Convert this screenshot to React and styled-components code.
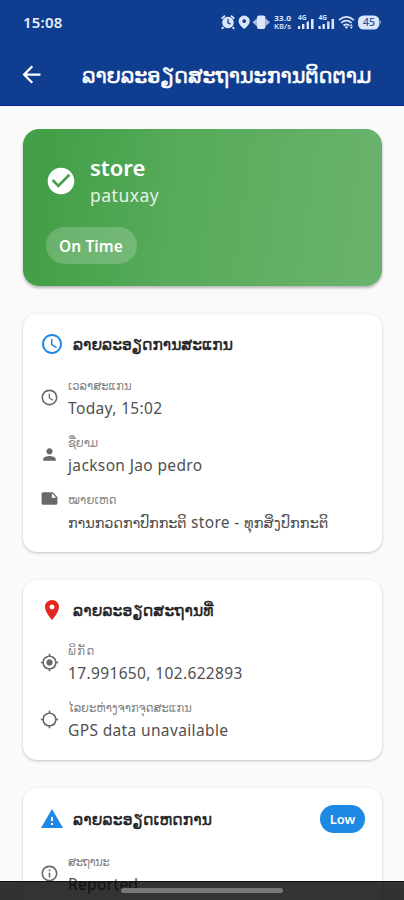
import React from 'react';
import styled, { createGlobalStyle } from 'styled-components';
import {
  MdAccessTime, MdPerson, MdNote, MdLocationOn, MdMyLocation, MdLocationSearching,
  MdWarning, MdInfoOutline, MdCheckCircle, MdArrowBack,
} from 'react-icons/md';

const GlobalStyle = createGlobalStyle`
  * { box-sizing: border-box; }
  body { margin: 0; background: #fafafa; overflow: hidden; }
`;

const Screen = styled.div`
  position: relative;
  width: 404px;
  height: 900px;
  overflow: hidden;
  background: #fafafa;
  font-family: 'Noto Sans', 'DejaVu Sans', sans-serif;

  svg { flex-shrink: 0; }
`;

const Header = styled.header`
  height: 106px;
  background: #0f3e91;
  border-bottom: 1px solid #06208a;
  color: #fff;
`;

const StatusBar = styled.div`
  height: 44px;
  padding: 0 22px 0 23px;
  display: flex;
  align-items: center;
  justify-content: space-between;
`;

const Clock = styled.span`
  font-size: 15px;
  font-weight: 600;
  letter-spacing: 0.2px;
  color: #e6edfb;
`;

const StatusIcons = styled.svg`
  display: block;
  width: 164px;
  height: 20px;
`;

const AppBar = styled.div`
  height: 60px;
  padding-left: 18px;
  display: flex;
  align-items: center;
  gap: 37px;
`;

const AppTitle = styled.h1`
  margin: 2px 0 0;
  white-space: nowrap;
  font-size: 20.8px;
  font-weight: 400;
  line-height: 30px;
  -webkit-text-stroke: 0.5px currentColor;
  letter-spacing: ${(p) => p.$track}px;
`;

const Content = styled.main`
  padding: 23px 22px 0 23px;
  display: flex;
  flex-direction: column;
  gap: 28px;
`;

const Summary = styled.section`
  height: 157px;
  border-radius: 16px;
  padding: 23px;
  color: #fff;
  background: linear-gradient(98deg, #43a047 8%, #58ab5b 45%, #68b26b 92%);
  box-shadow: 0 2px 3px rgba(0, 0, 0, 0.28);
`;

const SummaryTop = styled.div`
  height: 57px;
  margin: 0 0 18px -1px;
  display: flex;
  align-items: center;
  gap: 13px;
`;

const StoreName = styled.div`
  font-size: 22px;
  font-weight: 600;
  line-height: 30px;
`;

const StorePlace = styled.div`
  font-size: 17.5px;
  line-height: 27px;
  letter-spacing: 0.5px;
  color: #e4f2e5;
`;

const TimeChip = styled.span`
  display: inline-flex;
  align-items: center;
  justify-content: center;
  width: 91px;
  height: 37px;
  padding-right: 1px;
  border-radius: 19px;
  background: rgba(255, 255, 255, 0.2);
  font-size: 15.5px;
  font-weight: 600;
  letter-spacing: 0.1px;
`;

const Card = styled.section`
  height: ${(p) => p.$height}px;
  padding: 17px;
  border-radius: 14px;
  background: #fff;
  box-shadow: 0 1px 3px rgba(0, 0, 0, 0.22);
`;

const CardHead = styled.div`
  height: ${(p) => p.$height || 26}px;
  margin-bottom: ${(p) => p.$gap}px;
  display: flex;
  align-items: center;
  gap: 9px;
  color: ${(p) => p.$color};
`;

const CardTitle = styled.h2`
  margin: 0;
  flex: 1;
  white-space: nowrap;
  color: #1c1c1c;
  font-size: 15.5px;
  font-weight: 400;
  line-height: 26px;
  -webkit-text-stroke: 0.45px currentColor;
  letter-spacing: ${(p) => p.$track}px;
`;

const SeverityChip = styled.span`
  display: inline-flex;
  align-items: center;
  justify-content: center;
  width: 45px;
  height: 28px;
  border-radius: 14px;
  background: #1e88e5;
  color: #fff;
  font-size: 13px;
  font-weight: 600;
`;

const Row = styled.div`
  height: 44px;
  margin-bottom: 13px;
  display: flex;
  align-items: ${(p) => (p.$top ? 'flex-start' : 'center')};
  gap: 9px;
  color: #686868;
`;

const Label = styled.div`
  height: 20px;
  white-space: nowrap;
  font-size: 11.5px;
  line-height: 21px;
  color: #858585;
  letter-spacing: ${(p) => p.$track}px;
`;

const Value = styled.div`
  height: 24px;
  white-space: nowrap;
  font-size: 15.5px;
  line-height: 26px;
  color: #505050;
  letter-spacing: ${(p) => p.$track}px;
`;

const LaoText = styled.span`
  font-size: 14.5px;
  letter-spacing: ${(p) => p.$track}px;
`;

const NavBar = styled.div`
  position: absolute;
  left: 0;
  right: 0;
  bottom: 0;
  height: 19px;
  display: flex;
  justify-content: center;
  padding-top: 6px;
  background: rgba(0, 0, 0, 0.8);
  border-top: 1px solid #111;
`;

const NavHandle = styled.div`
  width: 162px;
  height: 5px;
  border-radius: 3px;
  background: #777;
`;

function Signal({ x }) {
  return (
    <g transform={`translate(${x} 0)`}>
      <text x="0" y="8.2" fontSize="6.5" fontWeight="700">4G</text>
      <rect x="0" y="14" width="2.2" height="3" />
      <rect x="4" y="12" width="2.4" height="5" />
      <rect x="8.6" y="9.5" width="2.4" height="7.5" />
      <rect x="13" y="7" width="2.6" height="10" />
    </g>
  );
}

function StatusGlyphs() {
  return (
    <StatusIcons viewBox="0 0 164 20" fill="#dce6fa" fontFamily="Noto Sans, sans-serif">
      <circle cx="10" cy="10.5" r="5.8" />
      <path d="M3.6 6.6 7 3.7M16.4 6.6 13 3.7M5.5 15l-1.7 1.9M14.5 15l1.7 1.9" stroke="#dce6fa" strokeWidth="1.8" />
      <path d="M10 7v3.8l2.5 1.3" fill="none" stroke="#0f3e91" strokeWidth="1.3" />
      <path fillRule="evenodd" d="M26.2 3.5a5.6 5.6 0 0 0-5.6 5.6c0 3.9 5.6 7.9 5.6 7.9s5.6-4 5.6-7.9a5.6 5.6 0 0 0-5.6-5.6zm0 3.7a1.9 1.9 0 1 1 0 3.8 1.9 1.9 0 0 1 0-3.8z" />
      <rect x="39" y="3.5" width="8.4" height="13.5" rx="2" />
      <path d="M39 6.3v8l-4.6-4zM47.4 6.3v8l4.6-4z" opacity="0.75" />
      <text x="56" y="9" fontSize="6.8" fontWeight="700" textLength="17" lengthAdjust="spacingAndGlyphs">33.0</text>
      <text x="56" y="17" fontSize="6.8" fontWeight="600" textLength="17" lengthAdjust="spacingAndGlyphs">KB/s</text>
      <Signal x={80} />
      <Signal x={100.5} />
      <g fill="none" stroke="#dce6fa" strokeWidth="1.7">
        <path d="M121 8.1q7.4-6.4 14.8 0" />
        <path d="M123.2 10.9q5.2-4.4 10.4 0" />
        <path d="M125.5 13.5q2.9-2.4 5.8 0" />
      </g>
      <path d="M126.4 14.6h4l-2 2.4zM133.3 12l1.5 2h-3zM133.3 17l1.5-2.2h-3z" />
      <rect x="140" y="3.5" width="21.4" height="14" rx="5.5" />
      <path d="M162.4 8q1.6 2.4 0 5z" />
      <text x="145" y="14.2" fontSize="10.5" fontWeight="500" fill="#304f8e">45</text>
    </StatusIcons>
  );
}

function Detail({ icon: Icon, label, track = 0, top, valueTrack = 0.36, children }) {
  return (
    <Row $top={top}>
      <Icon size={19} />
      <div>
        <Label $track={track}>{label}</Label>
        <Value $track={valueTrack}>{children}</Value>
      </div>
    </Row>
  );
}

export default function App() {
  return (
    <Screen>
      <GlobalStyle />
      <Header>
        <StatusBar>
          <Clock>15:08</Clock>
          <StatusGlyphs />
        </StatusBar>
        <AppBar>
          <MdArrowBack size={27} />
          <AppTitle $track={-0.08}>ລາຍລະອຽດສະຖານະການຕິດຕາມ</AppTitle>
        </AppBar>
      </Header>
      <Content>
        <Summary>
          <SummaryTop>
            <MdCheckCircle size={32} />
            <div>
              <StoreName>store</StoreName>
              <StorePlace>patuxay</StorePlace>
            </div>
          </SummaryTop>
          <TimeChip>On Time</TimeChip>
        </Summary>

        <Card $height={238}>
          <CardHead $color="#1e88e5" $gap={18}>
            <MdAccessTime size={24} />
            <CardTitle $track={0}>ລາຍລະອຽດການສະແກນ</CardTitle>
          </CardHead>
          <Detail icon={MdAccessTime} label="ເວລາສະແກນ">Today, 15:02</Detail>
          <Detail icon={MdPerson} label="ຊື່ຍາມ">jackson Jao pedro</Detail>
          <Detail icon={MdNote} label="ໝາຍເຫດ" track={0.2} top>
            <LaoText $track={-0.13}>ການກວດກາປົກກະຕິ</LaoText> store - <LaoText $track={0.1}>ທຸກສິ່ງປົກກະຕິ</LaoText>
          </Detail>
        </Card>

        <Card $height={180}>
          <CardHead $color="#e52520" $gap={17}>
            <MdLocationOn size={24} />
            <CardTitle $track={0.12}>ລາຍລະອຽດສະຖານທີ່</CardTitle>
          </CardHead>
          <Detail icon={MdMyLocation} label="ພິກັດ" track={1.4}>17.991650, 102.622893</Detail>
          <Detail icon={MdLocationSearching} label="ໄລຍະຫ່າງຈາກຈຸດສະແກນ">GPS data unavailable</Detail>
        </Card>

        <Card $height={240}>
          <CardHead $color="#1e88e5" $height={28} $gap={18}>
            <MdWarning size={24} />
            <CardTitle $track={0.14}>ລາຍລະອຽດເຫດການ</CardTitle>
            <SeverityChip>Low</SeverityChip>
          </CardHead>
          <Detail icon={MdInfoOutline} label="ສະຖານະ" track={-0.4}>Reported</Detail>
        </Card>
      </Content>
      <NavBar><NavHandle /></NavBar>
    </Screen>
  );
}
